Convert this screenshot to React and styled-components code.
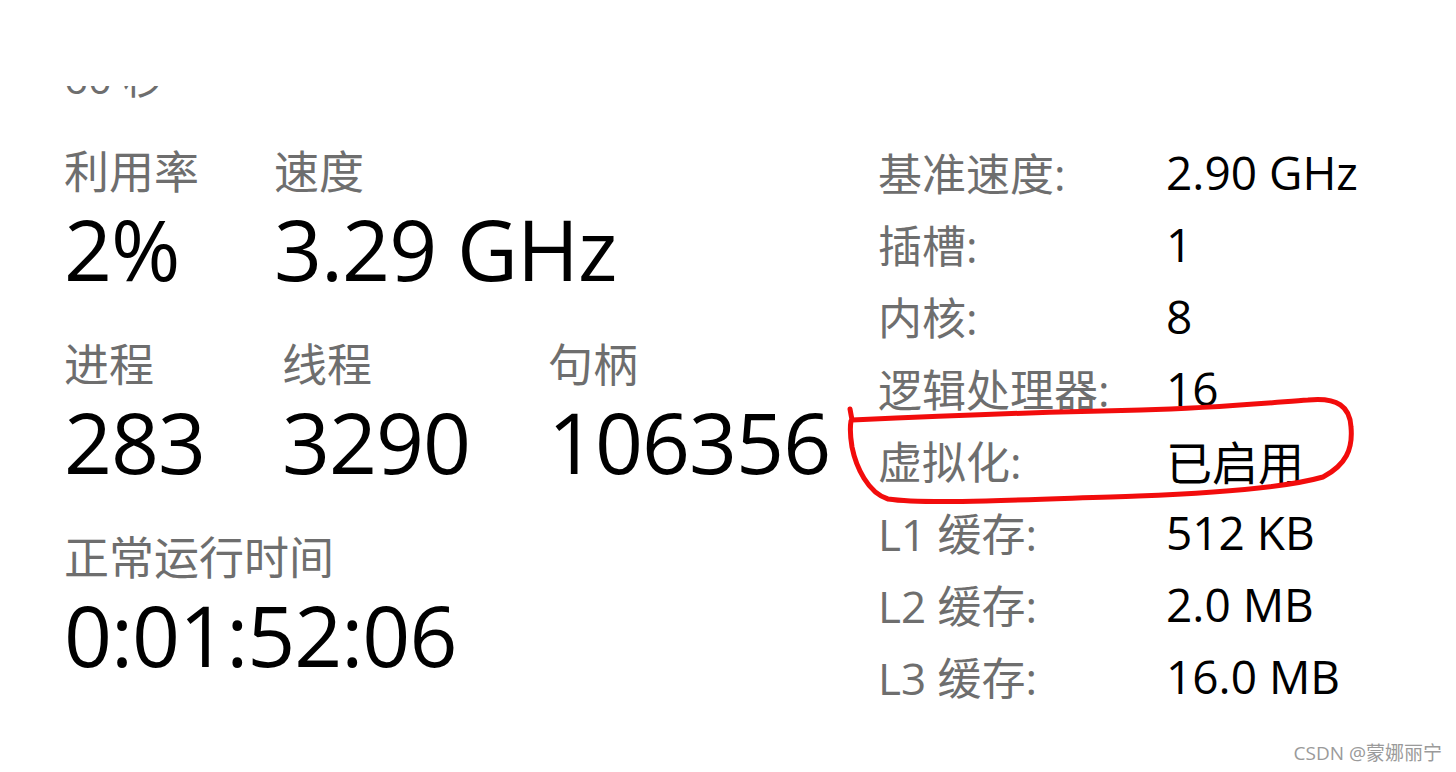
import React from "react";
import styled, { createGlobalStyle } from "styled-components";

const GlobalStyle = createGlobalStyle`
  html, body {
    margin: 0;
    padding: 0;
    background: #ffffff;
  }
  body {
    width: 1456px;
    height: 772px;
    overflow: hidden;
    font-family: "Open Sans", "Noto Sans CJK SC", sans-serif;
  }
`;

const Page = styled.div`
  position: relative;
  width: 1456px;
  height: 772px;
  background: #fff;
  display: flex;
  padding-left: 64px;
  box-sizing: border-box;
`;

const LeftPane = styled.div`
  width: 814px;
  display: flex;
  flex-direction: column;
`;

const TopClip = styled.div`
  margin-top: 86px;
  height: 14px;
  overflow: hidden;
  display: flex;
  align-items: flex-end;
`;

const ClippedText = styled.div`
  font-size: 42px;
  line-height: 42px;
  color: #6e6e6e;
  margin-bottom: 1px;
`;

const StatRow = styled.div`
  display: flex;
  margin-top: ${(p) => p.top}px;
`;

const Stat = styled.div`
  width: ${(p) => (p.w ? `${p.w}px` : "auto")};
  display: flex;
  flex-direction: column;
`;

const Label = styled.div`
  font-family: "Noto Sans CJK SC", sans-serif;
  font-size: 45px;
  line-height: 48px;
  color: #6e6e6e;
  white-space: nowrap;
`;

const BigValue = styled.div`
  font-size: 84px;
  line-height: 90px;
  color: #000;
  margin-top: 10px;
  white-space: nowrap;
  letter-spacing: -1px;
`;

const RightPane = styled.div`
  display: flex;
  flex-direction: column;
  padding-top: 136px;
`;

const InfoRow = styled.div`
  position: relative;
  display: flex;
  align-items: center;
  height: 72px;
`;

const InfoLabel = styled.div`
  width: 288px;
  font-family: "Open Sans", "Noto Sans CJK SC", sans-serif;
  font-size: 44px;
  color: #6e6e6e;
  white-space: nowrap;
`;

const InfoValue = styled.div`
  font-family: "Open Sans", "Noto Sans CJK SC", sans-serif;
  font-size: 46px;
  color: #000;
  white-space: nowrap;
`;

const Mark = styled.svg`
  position: absolute;
  left: -40px;
  top: -37px;
  width: 530px;
  height: 130px;
  overflow: visible;
  pointer-events: none;
`;

const Watermark = styled.div`
  position: absolute;
  right: 14px;
  bottom: 6px;
  font-family: "Open Sans", "Noto Sans CJK SC", sans-serif;
  font-size: 19px;
  color: #9a9a9a;
`;

const info = [
  ["基准速度:", "2.90 GHz"],
  ["插槽:", "1"],
  ["内核:", "8"],
  ["逻辑处理器:", "16"],
  ["虚拟化:", "已启用", true],
  ["L1 缓存:", "512 KB"],
  ["L2 缓存:", "2.0 MB"],
  ["L3 缓存:", "16.0 MB"],
];

export default function App() {
  return (
    <>
      <GlobalStyle />
      <Page>
        <LeftPane>
          <TopClip>
            <ClippedText>60 秒</ClippedText>
          </TopClip>
          <StatRow top={46}>
            <Stat w={210}>
              <Label>利用率</Label>
              <BigValue>2%</BigValue>
            </Stat>
            <Stat>
              <Label>速度</Label>
              <BigValue>3.29 GHz</BigValue>
            </Stat>
          </StatRow>
          <StatRow top={45}>
            <Stat w={218}>
              <Label>进程</Label>
              <BigValue>283</BigValue>
            </Stat>
            <Stat w={266}>
              <Label>线程</Label>
              <BigValue>3290</BigValue>
            </Stat>
            <Stat>
              <Label>句柄</Label>
              <BigValue>106356</BigValue>
            </Stat>
          </StatRow>
          <StatRow top={45}>
            <Stat>
              <Label>正常运行时间</Label>
              <BigValue>0:01:52:06</BigValue>
            </Stat>
          </StatRow>
        </LeftPane>
        <RightPane>
          {info.map(([k, v, marked]) => (
            <InfoRow key={k}>
              <InfoLabel>{k}</InfoLabel>
              <InfoValue>{v}</InfoValue>
              {marked && (
                <Mark viewBox="0 0 530 130">
                  <path
                    d="M12 22 L14 33 C80 30 200 25 303 23 C380 21 430 16 470 13 C500 10 512 20 513 40 C515 62 508 78 485 90 C450 100 380 106 300 109 C200 112 90 118 50 112 C30 106 18 80 14 60 C12 48 12 40 13 34"
                    fill="none"
                    stroke="#f20c0c"
                    strokeWidth="5"
                    strokeLinecap="round"
                    strokeLinejoin="round"
                  />
                </Mark>
              )}
            </InfoRow>
          ))}
        </RightPane>
        <Watermark>CSDN @蒙娜丽宁</Watermark>
      </Page>
    </>
  );
}
